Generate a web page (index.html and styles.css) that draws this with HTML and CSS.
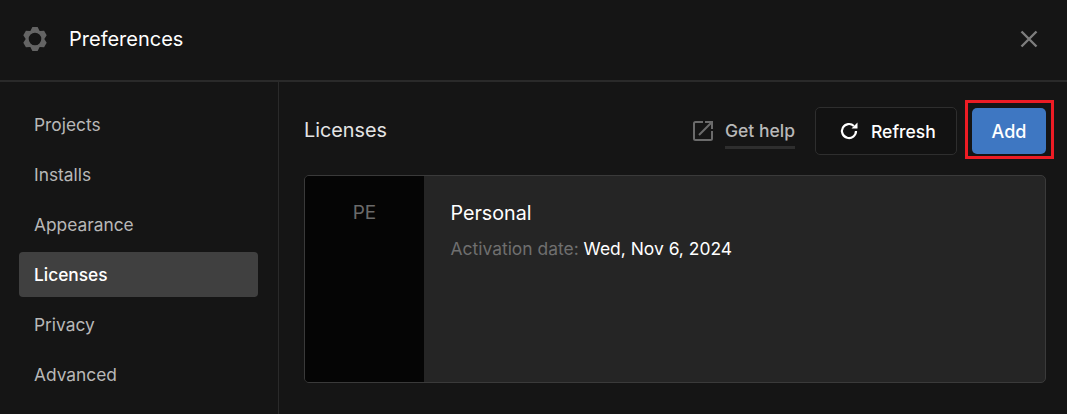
FILE: index.html
```html
<!DOCTYPE html>
<html lang="en">
<head>
<meta charset="utf-8">
<title>Preferences</title>
<link rel="stylesheet" href="styles.css">
</head>
<body>
<div class="dialog">
  <header class="header">
    <svg class="gear" width="24" height="24" viewBox="0 0 24 24" aria-hidden="true">
      <path fill-rule="evenodd" d="M9.400 0H14.600L16.650 3.950 21.090 3.750 23.690 8.250 21.300 12 23.690 15.750 21.090 20.250 16.650 20.050 14.600 24H9.400L7.350 20.050 2.910 20.250 .31 15.750 2.700 12 .31 8.250 2.910 3.750 7.350 3.950zM12 5.700a6.300 6.300 0 1 0 0 12.600 6.300 6.300 0 0 0 0-12.600z"/>
    </svg>
    <h1 class="title">Preferences</h1>
    <button class="close" aria-label="Close">
      <svg width="18" height="18" viewBox="0 0 18 18" aria-hidden="true"><path d="M1.500 1.500l15 15M16.500 1.500l-15 15"/></svg>
    </button>
  </header>
  <div class="body">
    <nav class="sidebar">
      <a class="nav-item">Projects</a>
      <a class="nav-item">Installs</a>
      <a class="nav-item">Appearance</a>
      <a class="nav-item active">Licenses</a>
      <a class="nav-item">Privacy</a>
      <a class="nav-item">Advanced</a>
    </nav>
    <main class="main">
      <div class="toolbar">
        <h2 class="section-title">Licenses</h2>
        <a class="help">
          <svg width="20" height="20" viewBox="0 0 20 20" aria-hidden="true"><path d="M10 1H2.500A1.500 1.500 0 0 0 1 2.500v15A1.500 1.500 0 0 0 2.500 19h15a1.500 1.500 0 0 0 1.500-1.500V10M6 14L18 2M12 1h7v7"/></svg>
          <span class="help-label">Get help</span>
        </a>
        <button class="btn btn-refresh">
          <svg width="20" height="20" viewBox="0 0 20 20" aria-hidden="true"><path class="arc" d="M17 10a7 7 0 1 1-2.100-5"/><path class="tip" d="M12.500 7.500h6v-6z"/></svg>
          Refresh
        </button>
        <button class="btn btn-add">Add</button>
      </div>
      <section class="card">
        <div class="card-badge">PE</div>
        <div class="card-info">
          <div class="card-name">Personal</div>
          <div class="card-date"><span class="date-label">Activation date:</span> Wed, Nov 6, 2024</div>
        </div>
      </section>
    </main>
  </div>
</div>
<div class="highlight" aria-hidden="true"></div>
</body>
</html>
```

FILE: styles.css
```css
* { box-sizing: border-box; }
html, body { margin: 0; height: 100%; }
body {
  position: relative;
  overflow: hidden;
  background: #151515;
  color: #fff;
  font-family: Inter, "Liberation Sans", sans-serif;
}
.dialog { display: flex; flex-direction: column; height: 414px; }
.header {
  display: flex;
  align-items: center;
  height: 82px;
  padding: 0 29px 3px 22.5px;
  border-bottom: 2px solid #2a2a2a;
}
.gear { fill: #646464; flex: none; margin-top: 1px; }
.title { margin: 0 0 0 22.5px; font-size: 20px; font-weight: 400; color: #fff; flex: 1; }
.close { background: none; border: 0; padding: 0; display: flex; margin-top: 1px; }
.close path { stroke: #7d7d7d; stroke-width: 2.4; fill: none; }
.body { display: flex; flex: 1; min-height: 0; }
.sidebar {
  width: 279px;
  padding: 20px 20px 0 19px;
  border-right: 1px solid #2a2a2a;
  display: flex;
  flex-direction: column;
  gap: 5px;
}
.nav-item {
  display: flex;
  align-items: center;
  height: 45px;
  padding-left: 15px;
  border-radius: 4px;
  font-size: 17.33px;
  color: #b8b8b8;
}
.nav-item.active { background: #404040; color: #fff; font-weight: 500; }
.main { flex: 1; padding: 25px 21px 0 25px; }
.toolbar { display: flex; align-items: center; height: 48px; }
.section-title { margin: 0 0 2px; flex: 1; font-size: 19.8px; font-weight: 400; color: #e4e4e4; }
.help { display: flex; align-items: center; gap: 12px; margin-right: 20px; }
.help svg { fill: none; stroke: #6b6b6b; stroke-width: 2; }
.help-label {
  font-size: 17.5px;
  font-weight: 500;
  color: #b8b8b8;
  padding: 6px 0 5px;
  border-bottom: 3px solid #2e2e2e;
}
.btn {
  display: flex;
  align-items: center;
  font-family: inherit;
  font-weight: 500;
  color: #fff;
  border-radius: 5px;
}
.btn-refresh {
  width: 142px;
  height: 48px;
  gap: 12px;
  padding: 0 0 0 23px;
  font-size: 17.5px;
  background: #121212;
  border: 1px solid #2e2e2e;
}
.btn-refresh .arc { fill: none; stroke: #fff; stroke-width: 2.2; }
.btn-refresh .tip { fill: #fff; }
.btn-add {
  justify-content: center;
  width: 74px;
  height: 46px;
  margin-left: 15px;
  font-size: 18px;
  background: #3e77c2;
  border: 0;
}
.card {
  display: flex;
  height: 208px;
  margin-top: 20px;
  background: #252525;
  border: 1px solid #3a3a3a;
  border-radius: 5px;
  overflow: hidden;
}
.card-badge {
  width: 119px;
  padding-top: 26px;
  background: #050505;
  text-align: center;
  font-size: 19px;
  line-height: 22px;
  color: #6a6a6a;
}
.card-info { padding: 25px 26.5px; }
.card-name { font-size: 19.7px; line-height: 24px; color: #fff; }
.card-date { margin-top: 13px; font-size: 17.45px; line-height: 22px; color: #fff; }
.date-label { color: #6f6f6f; }
.highlight {
  position: absolute;
  left: 965px;
  top: 100px;
  width: 89px;
  height: 59px;
  border: 3px solid #ed1c24;
}
```
